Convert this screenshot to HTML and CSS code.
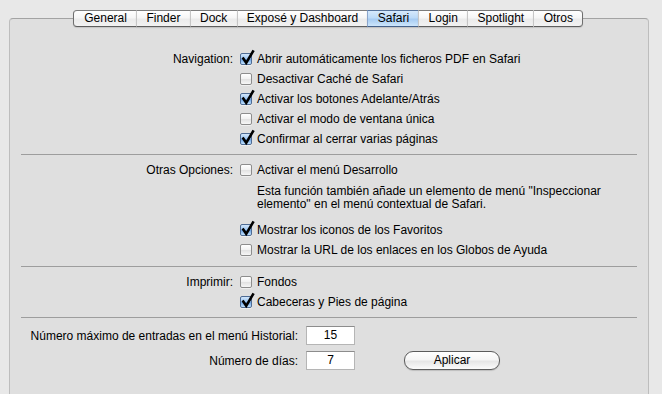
FILE: index.html
```html
<!DOCTYPE html>
<html lang="es">
<head>
<meta charset="utf-8">
<title>Safari</title>
<link rel="stylesheet" href="styles.css">
</head>
<body>
<div class="window">
  <div class="tabs">
    <div class="tab first">General</div>
    <div class="tab">Finder</div>
    <div class="tab">Dock</div>
    <div class="tab">Exposé y Dashboard</div>
    <div class="tab active">Safari</div>
    <div class="tab">Login</div>
    <div class="tab">Spotlight</div>
    <div class="tab last">Otros</div>
  </div>
  <div class="panel">
    <div class="section s1">
      <div class="row"><div class="label">Navigation:</div><span class="cb on"><svg viewBox="0 0 15 16" width="15" height="16"><path d="M2.6 8.6 L6.2 13.8 L13.6 1.4" fill="none" stroke="#000" stroke-width="2.6"/></svg></span><span class="txt">Abrir automáticamente los ficheros PDF en Safari</span></div>
      <div class="row"><div class="label"></div><span class="cb"></span><span class="txt">Desactivar Caché de Safari</span></div>
      <div class="row"><div class="label"></div><span class="cb on"><svg viewBox="0 0 15 16" width="15" height="16"><path d="M2.6 8.6 L6.2 13.8 L13.6 1.4" fill="none" stroke="#000" stroke-width="2.6"/></svg></span><span class="txt">Activar los botones Adelante/Atrás</span></div>
      <div class="row"><div class="label"></div><span class="cb"></span><span class="txt">Activar el modo de ventana única</span></div>
      <div class="row"><div class="label"></div><span class="cb on"><svg viewBox="0 0 15 16" width="15" height="16"><path d="M2.6 8.6 L6.2 13.8 L13.6 1.4" fill="none" stroke="#000" stroke-width="2.6"/></svg></span><span class="txt">Confirmar al cerrar varias páginas</span></div>
    </div>
    <div class="sep sep1"></div>
    <div class="section s2">
      <div class="row"><div class="label">Otras Opciones:</div><span class="cb"></span><span class="txt">Activar el menú Desarrollo</span></div>
      <p class="desc">Esta función también añade un elemento de menú "Inspeccionar<br>elemento" en el menú contextual de Safari.</p>
      <div class="row gap"><div class="label"></div><span class="cb on"><svg viewBox="0 0 15 16" width="15" height="16"><path d="M2.6 8.6 L6.2 13.8 L13.6 1.4" fill="none" stroke="#000" stroke-width="2.6"/></svg></span><span class="txt">Mostrar los iconos de los Favoritos</span></div>
      <div class="row"><div class="label"></div><span class="cb"></span><span class="txt">Mostrar la URL de los enlaces en los Globos de Ayuda</span></div>
    </div>
    <div class="sep sep2"></div>
    <div class="section s3">
      <div class="row"><div class="label">Imprimir:</div><span class="cb"></span><span class="txt">Fondos</span></div>
      <div class="row"><div class="label"></div><span class="cb on"><svg viewBox="0 0 15 16" width="15" height="16"><path d="M2.6 8.6 L6.2 13.8 L13.6 1.4" fill="none" stroke="#000" stroke-width="2.6"/></svg></span><span class="txt">Cabeceras y Pies de página</span></div>
    </div>
    <div class="sep sep3"></div>
    <div class="section s4">
      <div class="frow"><div class="flabel">Número máximo de entradas en el menú Historial:</div><div class="num">15</div></div>
      <div class="frow second"><div class="flabel">Número de días:</div><div class="num">7</div><div class="btn">Aplicar</div></div>
    </div>
  </div>
</div>
</body>
</html>
```
FILE: styles.css
```css
html, body {
  margin: 0;
  padding: 0;
  background: #e8e8e8;
}
body {
  width: 662px;
  height: 394px;
  overflow: hidden;
  font-family: "Liberation Sans", Arial, sans-serif;
  font-size: 12px;
  color: #000;
}
.window {
  padding-top: 10px;
  margin-left: 9px;
  width: 640px;
}
.tabs {
  position: relative;
  z-index: 1;
  display: flex;
  justify-content: center;
  height: 17px;
  padding-right: 2px;
}
.tab {
  box-sizing: border-box;
  height: 17px;
  line-height: 15px;
  padding: 0 9.25px;
  border-top: 1px solid #7c7c7c;
  border-bottom: 1px solid #5e5e5e;
  border-left: 1px solid #c6c6c6;
  background: linear-gradient(#ffffff, #f6f6f6 45%, #ebebeb 55%, #f2f2f2);
  box-shadow: 0 1px 1px rgba(0,0,0,0.12);
  white-space: nowrap;
}
.tab.first {
  border-left: 1px solid #6e6e6e;
  border-radius: 4px 0 0 4px;
  padding-left: 10.5px;
}
.tab.last {
  border-right: 1px solid #6e6e6e;
  border-radius: 0 4px 4px 0;
}
.tab.active {
  background: linear-gradient(#d6e9fc, #bcdaf8 45%, #a6cbf2 55%, #cde6fc);
  border-top-color: #56739c;
  border-bottom-color: #45618a;
  border-left-color: #8ba6cc;
  box-shadow: 1px 0 0 #8ba6cc, 0 1px 1px rgba(0,0,0,0.12);
}
.panel {
  margin-top: -9px;
  box-sizing: border-box;
  height: 376px;
  border: 1px solid #bdbdbd;
  border-top-color: #a3a3a3;
  border-bottom: none;
  border-radius: 4px 4px 0 0;
  background: #dfdfdf;
}
.section {
  margin: 0 11px;
}
.s1 {
  padding-top: 30px;
}
.row {
  display: flex;
  align-items: center;
  height: 20px;
  white-space: nowrap;
}
.label {
  flex: 0 0 219px;
  box-sizing: border-box;
  padding-right: 7px;
  text-align: right;
}
.cb {
  flex: 0 0 auto;
  box-sizing: border-box;
  width: 12px;
  height: 12px;
  margin-right: 5px;
  border: 1px solid #8d8d8d;
  border-radius: 2px;
  background: linear-gradient(#ffffff, #f1f1f1 50%, #e3e3e3 55%, #f7f7f7);
  box-shadow: 0 1px 0 rgba(255,255,255,0.5);
}
.cb.on {
  border-color: #4e6b93;
  background: linear-gradient(#d2e6fb, #99c4f1 50%, #6fa6e6 55%, #bfe0fd);
}
.cb svg {
  display: block;
  margin: -5px 0 0 -1px;
  overflow: visible;
}
.sep {
  height: 1px;
  margin: 0 11px;
  background: #9d9d9d;
}
.sep1 {
  margin-top: 5px;
}
.s2 {
  padding-top: 5px;
}
.desc {
  margin: 5px 0 0 236px;
  font-size: 12px;
  line-height: 13px;
}
.row.gap {
  margin-top: 9px;
}
.sep2 {
  margin-top: 6px;
}
.s3 {
  padding-top: 5px;
}
.sep3 {
  margin-top: 5px;
}
.s4 {
  padding-top: 8px;
}
.frow {
  display: flex;
  align-items: center;
  height: 19px;
  white-space: nowrap;
}
.frow.second {
  margin-top: 6px;
}
.flabel {
  flex: 0 0 277px;
  text-align: right;
  margin-right: 8px;
}
.num {
  box-sizing: border-box;
  width: 49px;
  height: 19px;
  line-height: 17px;
  text-align: center;
  background: #fff;
  border: 1px solid #b5b5b5;
  border-top-color: #8c8c8c;
}
.btn {
  box-sizing: border-box;
  width: 96px;
  height: 19px;
  line-height: 17px;
  margin-left: 49px;
  text-align: center;
  border: 1px solid #5c5c5c;
  border-radius: 9px;
  background: linear-gradient(#ffffff, #f6f6f6 45%, #e6e6e6 55%, #fbfbfb);
  box-shadow: 0 1px 1px rgba(0,0,0,0.15);
}
```
